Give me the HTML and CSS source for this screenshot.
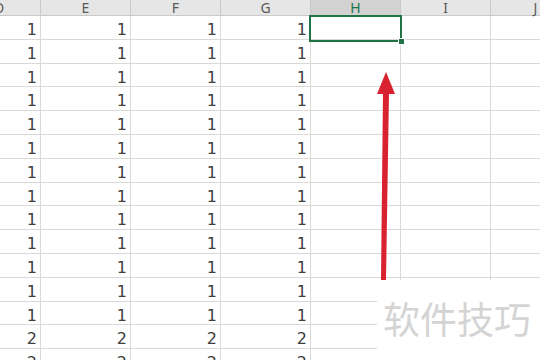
FILE: index.html
```html
<!DOCTYPE html>
<html>
	<head>
		<title>Sheet</title>
		<link rel="stylesheet" href="styles.css">
	</head>
	<body>
		<div id="sheet">
			<div class="grid" id="grid"></div>
			<div class="selection"><span class="handle"></span></div>
			<svg class="arrow" width="40" height="220" viewBox="0 0 40 220">
				<polygon points="18,4 9,26 27,26" fill="#d9222f"/>
				<polygon points="15,24 21,24 18,212 13,212" fill="#d9222f"/>
			</svg>
			<div class="mark">软件技巧</div>
		</div>
		<script>
			var cols = ["D", "E", "F", "G", "H", "I", "J"];
			var grid = document.getElementById("grid");
			var html = "";

			// header row
			for(i = 0; i < cols.length; i++){
				var cls = "head";
				if(cols[i] == "H"){ cls += " active"; }
				html += '<div class="' + cls + '">' + cols[i] + '</div>';
			}

			// 13 rows of ones, then twos
			for(r = 0; r < 15; r++){
				var v = r < 13 ? "1" : "2";
				for(i = 0; i < cols.length; i++){
					var txt = i < 4 ? v : "";
					html += '<div class="cell">' + txt + '</div>';
				}
			}
			grid.innerHTML = html;
		</script>
	</body>
</html>
```

FILE: styles.css
```css
* {
	box-sizing: border-box;
}
html, body {
	margin: 0;
	height: 100%;
	background: #ffffff;
}
#sheet {
	position: relative;
	width: 540px;
	height: 360px;
	overflow: hidden;
}
.grid {
	display: grid;
	grid-template-columns: 41px repeat(6, 90px);
	grid-template-rows: 16px;
	grid-auto-rows: 23.8px;
}
	.head {
		background: #e6e6e6;
		border-right: 1px solid #c9c9c9;
		border-bottom: 1px solid #c9c9c9;
		color: #595959;
		font-family: "Noto Sans", sans-serif;
		font-size: 14px;
		line-height: 16px;
		text-align: center;
	}
	.head:first-child {
		text-align: left;
		text-indent: -6px;
	}
	.head.active {
		background: #d2d2d2;
		color: #217346;
		border-bottom: 1px solid #217346;
	}
	.cell {
		border-right: 1px solid #d9d9d9;
		border-bottom: 1px solid #d9d9d9;
		font-family: "DejaVu Sans", sans-serif;
		font-size: 16px;
		line-height: 18px;
		padding-top: 5px;
		padding-right: 3px;
		text-align: right;
		color: #404040;
	}
.selection {
	position: absolute;
	left: 309px;
	top: 15px;
	width: 93px;
	height: 27px;
	border: 2px solid #217346;
}
	.handle {
		position: absolute;
		right: -5px;
		bottom: -5px;
		width: 7px;
		height: 7px;
		background: #217346;
		border: 1px solid #ffffff;
	}
.arrow {
	position: absolute;
	left: 368px;
	top: 68px;
}
.mark {
	position: absolute;
	left: 377px;
	top: 280px;
	width: 163px;
	height: 80px;
	background: #ffffff;
	color: #d4d4d4;
	font-family: "Noto Sans CJK SC", sans-serif;
	font-size: 37px;
	line-height: 40px;
	padding-top: 18px;
	padding-left: 6px;
	white-space: nowrap;
}
```
